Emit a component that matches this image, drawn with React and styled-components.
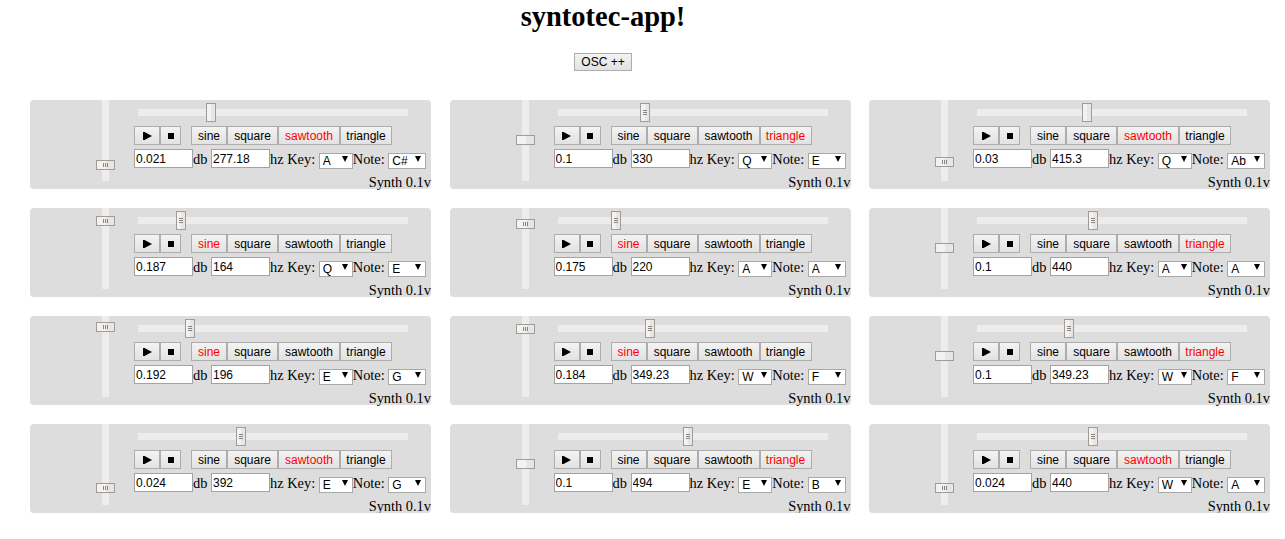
import styled, { createGlobalStyle } from "styled-components";

const synths = [
  { db: 0.021, hz: 277.18, key: "A", note: "C#", wave: "sawtooth", grip: false },
  { db: 0.1, hz: 330, key: "Q", note: "E", wave: "triangle", grip: true },
  { db: 0.03, hz: 415.3, key: "Q", note: "Ab", wave: "sawtooth", grip: false },
  { db: 0.187, hz: 164, key: "Q", note: "E", wave: "sine", grip: true },
  { db: 0.175, hz: 220, key: "A", note: "A", wave: "sine", grip: true },
  { db: 0.1, hz: 440, key: "A", note: "A", wave: "triangle", grip: true },
  { db: 0.192, hz: 196, key: "E", note: "G", wave: "sine", grip: true },
  { db: 0.184, hz: 349.23, key: "W", note: "F", wave: "sine", grip: true },
  { db: 0.1, hz: 349.23, key: "W", note: "F", wave: "triangle", grip: true },
  { db: 0.024, hz: 392, key: "E", note: "G", wave: "sawtooth", grip: true },
  { db: 0.1, hz: 494, key: "E", note: "B", wave: "triangle", grip: true },
  { db: 0.024, hz: 440, key: "W", note: "A", wave: "sawtooth", grip: true },
];

// button widths measured from the layout
const waves = [
  { name: "sine", w: 36 },
  { name: "square", w: 51 },
  { name: "sawtooth", w: 62 },
  { name: "triangle", w: 52 },
];
const keys = ["A", "W", "S", "E", "D", "F", "T", "G", "Y", "H", "U", "J", "K", "Q"];
const notes = ["C", "C#", "D", "Eb", "E", "F", "F#", "G", "Ab", "A", "Bb", "B"];

const Global = createGlobalStyle`
  body {
    margin: 0;
    background: #fff;
    font-family: "Liberation Serif", "Times New Roman", serif;
    color: #000;
  }
`;

const Header = styled.div`
  width: 1206px;
  text-align: center;
`;

const Title = styled.h1`
  margin: 1px 0 0;
  font-size: 28.5px;
  font-weight: bold;
  line-height: normal;
`;

const Btn = styled.button`
  box-sizing: border-box;
  height: 19px;
  margin: 0;
  padding: 0 5px;
  border: 1px solid #adadad;
  border-radius: 0;
  background: linear-gradient(#f3f3f3, #e2e2e2);
  font-family: "Liberation Sans", Arial, sans-serif;
  font-size: 12px;
  line-height: 16px;
  color: ${(p) => (p.$active ? "#ff0000" : "#000")};
  display: inline-flex;
  align-items: center;
  justify-content: center;
  width: ${(p) => (p.$w ? `${p.$w}px` : "auto")};
`;

const OscButton = styled(Btn)`
  display: flex;
  height: 18px;
  margin: 20px auto 0;
  width: 58px;
`;

const Grid = styled.div`
  display: grid;
  grid-template-columns: repeat(3, 401px);
  grid-auto-rows: 89px;
  column-gap: 18.5px;
  row-gap: 19px;
  padding-left: 30px;
  margin-top: 29px;
`;

const Card = styled.div`
  display: grid;
  grid-template-columns: 104px 1fr;
  background: #dddddd;
  border-radius: 4px;
`;

const VCol = styled.div`
  padding-left: 72px;
`;

const Track = styled.div`
  position: relative;
  background: #ededed;
  width: ${(p) => (p.$vertical ? "7px" : "270px")};
  height: ${(p) => (p.$vertical ? "81px" : "7px")};
`;

const Thumb = styled.div`
  position: absolute;
  box-sizing: border-box;
  width: ${(p) => (p.$vertical ? "19px" : "10px")};
  height: ${(p) => (p.$vertical ? "10px" : "19px")};
  left: ${(p) => (p.$vertical ? "-6px" : "auto")};
  top: ${(p) => (p.$vertical ? "auto" : "-6px")};
  background: linear-gradient(90deg, #f4f2f0 50%, #e8e6e4 50%);
  border: 1px solid #a29c96;
  display: flex;
  align-items: center;
  justify-content: center;
`;

const Main = styled.div`
  display: flex;
  flex-direction: column;
  padding-top: 9px;
`;

const HTrackWrap = styled.div`
  padding-left: 4px;
`;

const ButtonRow = styled.div`
  display: flex;
  margin-top: 10px;
  gap: 10px;
`;

const Group = styled.div`
  display: flex;
`;

const InputRow = styled.div`
  display: flex;
  align-items: center;
  margin-top: 4px;
  height: 19px;
`;

const NumInput = styled.input`
  box-sizing: border-box;
  width: 59px;
  height: 19px;
  margin: 0;
  padding: 0 1px;
  border: 1px solid #a3a3a3;
  background: #fff;
  font-family: "Liberation Sans", Arial, sans-serif;
  font-size: 12px;
  color: #000;
  outline: none;
`;

const Label = styled.span`
  font-size: 14.4px;
  white-space: pre;
  line-height: 16px;
`;

const SelectBox = styled.span`
  position: relative;
  display: inline-block;
  width: ${(p) => p.$w}px;
  height: 16px;
`;

const Select = styled.select`
  appearance: none;
  box-sizing: border-box;
  width: 100%;
  height: 16px;
  margin: 0;
  padding: 0 0 0 3px;
  border: 1px solid #a9a9a9;
  border-radius: 0;
  background: #fff;
  font-family: "Liberation Sans", Arial, sans-serif;
  font-size: 12px;
  line-height: 14px;
  color: #000;
  outline: none;
`;

const Arrow = styled.span`
  position: absolute;
  right: 5px;
  top: 5px;
  width: 0;
  height: 0;
  border-left: 3px solid transparent;
  border-right: 3px solid transparent;
  border-top: 6px solid #000;
  pointer-events: none;
`;

const Footer = styled.div`
  margin-top: 6px;
  text-align: right;
  font-size: 14.4px;
  line-height: 16px;
  white-space: nowrap;
`;

const VGrip = () => (
  <svg width="7" height="4" viewBox="0 0 7 4">
    <path d="M1.5 0v4M3.5 0v4M5.5 0v4" stroke="#8a8580" strokeWidth="1" />
  </svg>
);

const HGrip = () => (
  <svg width="4" height="7" viewBox="0 0 4 7">
    <path d="M0 1.5h4M0 3.5h4M0 5.5h4" stroke="#8a8580" strokeWidth="1" />
  </svg>
);

const PlayIcon = () => (
  <svg width="9" height="8" viewBox="0 0 9 8">
    <path d="M0 0h1.5v8H0zM1.5 0L9 4 1.5 8z" fill="#000" />
  </svg>
);

const StopIcon = () => (
  <svg width="6" height="6" viewBox="0 0 6 6">
    <rect width="6" height="6" fill="#000" />
  </svg>
);

const Picker = ({ value, options, width }) => (
  <SelectBox $w={width}>
    <Select defaultValue={value}>
      {options.map((o) => (
        <option key={o} value={o}>
          {o}
        </option>
      ))}
    </Select>
    <Arrow />
  </SelectBox>
);

const Synth = ({ s }) => {
  const vTop = 71.6 - 316 * s.db - 5;
  const hLeft = 0.264 * s.hz - 5;
  return (
    <Card>
      <VCol>
        <Track $vertical>
          <Thumb $vertical style={{ top: `${vTop}px` }}>
            {s.db !== 0.1 && <VGrip />}
          </Thumb>
        </Track>
      </VCol>
      <Main>
        <HTrackWrap>
          <Track>
            <Thumb style={{ left: `${hLeft}px` }}>{s.grip && <HGrip />}</Thumb>
          </Track>
        </HTrackWrap>
        <ButtonRow>
          <Group>
            <Btn $w={26}>
              <PlayIcon />
            </Btn>
            <Btn $w={21}>
              <StopIcon />
            </Btn>
          </Group>
          <Group>
            {waves.map((w) => (
              <Btn key={w.name} $w={w.w} $active={w.name === s.wave}>
                {w.name}
              </Btn>
            ))}
          </Group>
        </ButtonRow>
        <InputRow>
          <NumInput defaultValue={s.db} />
          <Label>db </Label>
          <NumInput defaultValue={s.hz} />
          <Label>hz Key: </Label>
          <Picker value={s.key} options={keys} width={34} />
          <Label>Note: </Label>
          <Picker value={s.note} options={notes} width={38} />
        </InputRow>
        <Footer>Synth 0.1v</Footer>
      </Main>
    </Card>
  );
};

const App = () => (
  <>
    <Global />
    <Header>
      <Title>syntotec-app!</Title>
      <OscButton>OSC ++</OscButton>
    </Header>
    <Grid>
      {synths.map((s, i) => (
        <Synth key={i} s={s} />
      ))}
    </Grid>
  </>
);

export default App;
